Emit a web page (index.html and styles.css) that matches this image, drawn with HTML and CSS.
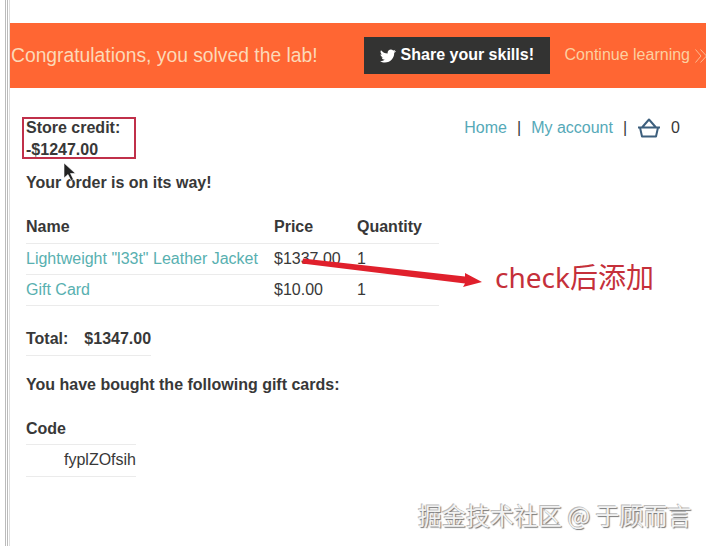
FILE: index.html
```html
<!DOCTYPE html>
<html lang="en">
<head>
    <meta charset="UTF-8">
    <meta name="viewport" content="width=device-width, initial-scale=1.0">
    <title>Order confirmation</title>
    <link rel="stylesheet" href="styles.css">
</head>
<body>
    <div class="page">
        <div class="lab-banner">
            <p class="lab-message">Congratulations, you solved the lab!</p>
            <a class="share-button" href="#">
                <svg class="twitter-icon" viewBox="0 0 24 24"><path d="M23.6 4.6c-.9.4-1.8.7-2.8.8 1-.6 1.8-1.5 2.100-2.700-.9.6-2 1-3.100 1.200-.9-1-2.200-1.500-3.500-1.500-2.700 0-4.900 2.200-4.900 4.900 0 .4 0 .8.1 1.100C7.500 8.200 3.900 6.300 1.500 3.300c-.4.700-.7 1.500-.7 2.500 0 1.700.9 3.200 2.200 4.100-.8 0-1.600-.2-2.200-.6v.1c0 2.400 1.700 4.400 3.900 4.800-.4.1-.8.2-1.300.2-.3 0-.6 0-.9-.1.6 2 2.400 3.400 4.600 3.400-1.700 1.300-3.800 2.100-6.100 2.100-.4 0-.8 0-1.200-.1 2.200 1.400 4.800 2.200 7.500 2.200 9.100 0 14-7.500 14-14v-.6c1-.7 1.800-1.600 2.500-2.500z"/></svg>
                Share your skills!
            </a>
            <a class="continue-link" href="#">Continue learning
                <svg class="chevrons" viewBox="0 0 12 14"><path d="M.5.500l5.500 6.500-5.500 6.500M5.500.500l6 6.500-6 6.500"/></svg>
            </a>
        </div>

        <div class="content">
            <div class="top-row">
                <p class="store-credit">Store credit:<br>-$1247.00</p>
                <nav class="top-nav">
                    <a href="#">Home</a>
                    <span class="sep">|</span>
                    <a href="#">My account</a>
                    <span class="sep">|</span>
                    <svg class="basket" viewBox="0 0 24 20"><path d="M1 9.500h22M3 9.500l2 9h14l2-9M5 9.500l7-8 7 8"/></svg>
                    <span class="cart-count">0</span>
                </nav>
            </div>

            <p class="order-note">Your order is on its way!</p>

            <table class="order-table">
                <tr>
                    <th class="name-col">Name</th>
                    <th class="price-col">Price</th>
                    <th>Quantity</th>
                </tr>
                <tr>
                    <td><a href="#">Lightweight "l33t" Leather Jacket</a></td>
                    <td>$1337.00</td>
                    <td>1</td>
                </tr>
                <tr>
                    <td><a href="#">Gift Card</a></td>
                    <td>$10.00</td>
                    <td>1</td>
                </tr>
            </table>

            <table class="total-table">
                <tr>
                    <th>Total:</th>
                    <th>$1347.00</th>
                </tr>
            </table>

            <p class="gift-note">You have bought the following gift cards:</p>

            <table class="code-table">
                <tr>
                    <th>Code</th>
                </tr>
                <tr>
                    <td>fyplZOfsih</td>
                </tr>
            </table>
        </div>
    </div>

    <!-- annotations drawn over the screenshot -->
    <div class="credit-box"></div>
    <svg class="cursor" viewBox="0 0 14 20"><path d="M1 1v15l4-3.500 3 6 2.500-1-3-6h5z"/></svg>
    <svg class="arrow" viewBox="0 0 190 40"><path d="M3 3.500L165 21.500 165 18 182 27 163 32 165 28.500 2 8.500z"/></svg>
    <div class="arrow-label">check后添加</div>
    <div class="watermark">掘金技术社区 @ 于顾而言</div>
</body>
</html>
```

FILE: styles.css
```css
html, body {
    margin: 0;
    padding: 0;
    height: 546px;
    overflow: hidden;
    background-color: #fff;
}
body {
    font-family: "Liberation Sans", Arial, sans-serif;
    font-size: 16px;
    color: #383838;
}
.page {
    box-sizing: border-box;
    height: 546px;
    width: 701px;
    margin-left: 5px;
    padding: 23px 0 0 4px;
    border-left: 1px solid #bbb;
    box-shadow: inset 1px 0 0 #fff, inset 2px 0 0 #bbb, inset 3px 0 0 #fff, inset 4px 0 0 #ddd;
}
.lab-banner {
    display: flex;
    align-items: center;
    height: 65px;
    background-color: #ff6633;
    overflow: hidden;
    white-space: nowrap;
}
.lab-message {
    margin: 0 46px 0 1px;
    font-size: 19.3px;
    color: #fcd9b8;
}
.share-button {
    display: flex;
    align-items: center;
    flex-shrink: 0;
    gap: 5px;
    box-sizing: border-box;
    width: 186px;
    height: 37px;
    padding: 0 0 2px 16px;
    background-color: #333332;
    color: #fff;
    font-weight: bold;
    text-decoration: none;
}
.twitter-icon {
    width: 16px;
    height: 16px;
    margin-top: 3px;
    fill: #fff;
}
.continue-link {
    display: flex;
    align-items: center;
    flex-shrink: 0;
    gap: 5px;
    margin-left: 15px;
    padding-bottom: 2px;
    color: #fcd0a0;
    text-decoration: none;
}
.chevrons {
    width: 12px;
    height: 14px;
    margin-top: 3px;
    fill: none;
    stroke: #fcb98f;
    stroke-width: 1;
}
.content {
    padding: 0 0 0 16px;
}
.top-row {
    display: flex;
    justify-content: space-between;
    padding-top: 29px;
}
.store-credit {
    margin: 0;
    font-weight: bold;
    line-height: 22px;
}
.top-nav {
    display: flex;
    align-items: center;
    height: 22px;
    margin-right: 26px;
}
.top-nav a {
    color: #56a9b8;
    text-decoration: none;
}
.sep {
    margin: 0 10px;
}
.basket {
    width: 24px;
    height: 20px;
    fill: none;
    stroke: #3d5f7d;
    stroke-width: 2;
    stroke-linejoin: round;
}
.cart-count {
    margin-left: 10px;
}
.order-note {
    margin: 11px 0 0;
    font-weight: bold;
    line-height: 22px;
}
table {
    border-collapse: collapse;
}
th {
    text-align: left;
}
.order-table {
    table-layout: fixed;
    margin-top: 18px;
    width: 413px;
}
.name-col {
    width: 248px;
}
.price-col {
    width: 83px;
}
.order-table th,
.order-table td {
    height: 31px;
    padding: 0;
    border-bottom: 1px solid #ebebeb;
    box-sizing: border-box;
}
.order-table a {
    color: #58b0b0;
    text-decoration: none;
}
.total-table {
    margin-top: 17px;
}
.total-table th {
    height: 32px;
    padding: 0 16px 0 0;
    border-bottom: 1px solid #ebebeb;
}
.total-table th:last-child {
    padding-right: 0;
}
.gift-note {
    margin: 18px 0 0;
    font-weight: bold;
    line-height: 22px;
}
.code-table {
    margin-top: 18px;
    width: 110px;
}
.code-table th,
.code-table td {
    height: 32px;
    padding: 0;
    border-bottom: 1px solid #ebebeb;
    box-sizing: border-box;
}
.code-table th {
    height: 31px;
}
.code-table td {
    padding-bottom: 2px;
    text-align: right;
}
.credit-box {
    position: absolute;
    left: 22px;
    top: 117px;
    width: 110px;
    height: 38px;
    border: 2px solid #c0304a;
}
.cursor {
    position: absolute;
    left: 63px;
    top: 162px;
    width: 14px;
    height: 20px;
    fill: #222;
    stroke: #fff;
    stroke-width: 0.6;
}
.arrow {
    position: absolute;
    left: 300px;
    top: 255px;
    width: 190px;
    height: 40px;
    fill: #e0202c;
}
.arrow-label {
    position: absolute;
    left: 495px;
    top: 259px;
    font-family: "Noto Sans", "Noto Sans CJK SC", sans-serif;
    font-size: 28px;
    line-height: 36px;
    color: #c5303a;
}
.watermark {
    position: absolute;
    left: 418px;
    top: 499px;
    font-family: "Noto Sans CJK SC", sans-serif;
    font-size: 24px;
    line-height: 32px;
    color: #f2f2f2;
    text-shadow: 1px 1px 1px #777, -1px -1px 0 #bbb;
    white-space: nowrap;
}
```
